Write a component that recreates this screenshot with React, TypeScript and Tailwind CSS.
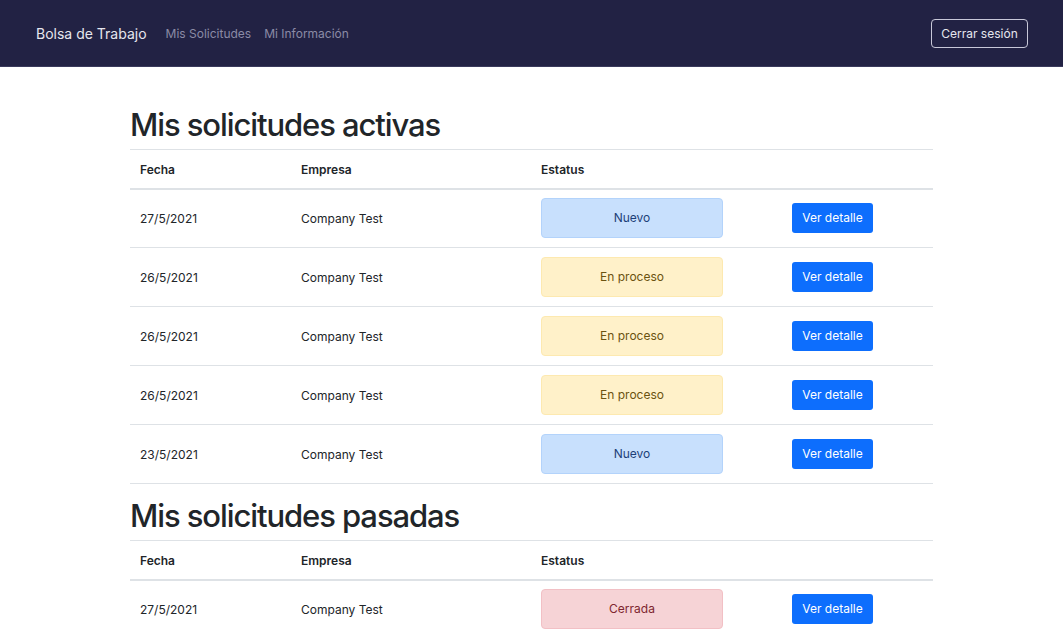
const activas = [
  { fecha: '27/5/2021', empresa: 'Company Test', estatus: 'Nuevo' },
  { fecha: '26/5/2021', empresa: 'Company Test', estatus: 'En proceso' },
  { fecha: '26/5/2021', empresa: 'Company Test', estatus: 'En proceso' },
  { fecha: '26/5/2021', empresa: 'Company Test', estatus: 'En proceso' },
  { fecha: '23/5/2021', empresa: 'Company Test', estatus: 'Nuevo' },
];

const pasadas = [{ fecha: '27/5/2021', empresa: 'Company Test', estatus: 'Cerrada' }];

const badgeStyles: Record<string, string> = {
  Nuevo: 'bg-[#c8e0fd] border-[#b3d3fb] text-[#1d3f78]',
  'En proceso': 'bg-[#fff1c9] border-[#fde9b0] text-[#6b5310]',
  Cerrada: 'bg-[#f6d3d6] border-[#f2c0c5] text-[#7e2630]',
};

type Row = { fecha: string; empresa: string; estatus: string };

function SolicitudesTable({ title, rows }: { title: string; rows: Row[] }) {
  return (
    <section>
      <h2 className="text-[31px] leading-[38px] font-medium tracking-[-0.035em] text-[#212529] mb-[5px]">{title}</h2>
      <table className="w-full border-collapse text-[12px] text-[#212529]">
        <thead>
          <tr className="border-t border-[#dee2e6] border-b-2 border-b-[#dee2e6]">
            <th className="w-[161px] h-[39px] px-[10px] pt-[2px] text-left font-semibold">Fecha</th>
            <th className="w-[240px] px-[10px] pt-[2px] text-left font-semibold">Empresa</th>
            <th className="w-[251px] px-[10px] pt-[2px] text-left font-semibold">Estatus</th>
            <th className="px-[10px]"></th>
          </tr>
        </thead>
        <tbody>
          {rows.map((r, idx) => (
            <tr key={idx} className="border-b border-[#dee2e6] h-[59px]">
              <td className="px-[10px] pt-[2px]">{r.fecha}</td>
              <td className="px-[10px] pt-[2px]">{r.empresa}</td>
              <td className="px-[10px]">
                <div
                  className={`w-[182px] h-[40px] flex items-center justify-center rounded-[4px] border ${badgeStyles[r.estatus]}`}
                >
                  {r.estatus}
                </div>
              </td>
              <td className="px-[10px]">
                <button className="w-[81px] h-[30px] rounded-[3px] bg-[#0d6efd] text-white text-[12px]">
                  Ver detalle
                </button>
              </td>
            </tr>
          ))}
        </tbody>
      </table>
    </section>
  );
}

export default function App() {
  return (
    <div className="min-h-screen bg-white font-['Inter',sans-serif]">
      <nav className="h-[67px] bg-[#222244] border-b border-[#3a3a5c] flex items-center justify-between pl-[36px] pr-[35px]">
        <div className="flex items-center pt-[1px]">
          <span className="text-[14px] text-[#e6e6ee] mr-[19px]">Bolsa de Trabajo</span>
          <a className="text-[12px] text-[#8b8ba6] mr-[13px]">Mis Solicitudes</a>
          <a className="text-[12px] text-[#8b8ba6]">Mi Información</a>
        </div>
        <button className="h-[29px] w-[97px] mt-[1px] rounded-[4px] border border-[#c8c8d8] text-[12px] text-[#e6e6ee]">
          Cerrar sesión
        </button>
      </nav>
      <main className="w-[803px] mx-auto pt-[39px] flex flex-col gap-[13px]">
        <SolicitudesTable title="Mis solicitudes activas" rows={activas} />
        <SolicitudesTable title="Mis solicitudes pasadas" rows={pasadas} />
      </main>
    </div>
  );
}
